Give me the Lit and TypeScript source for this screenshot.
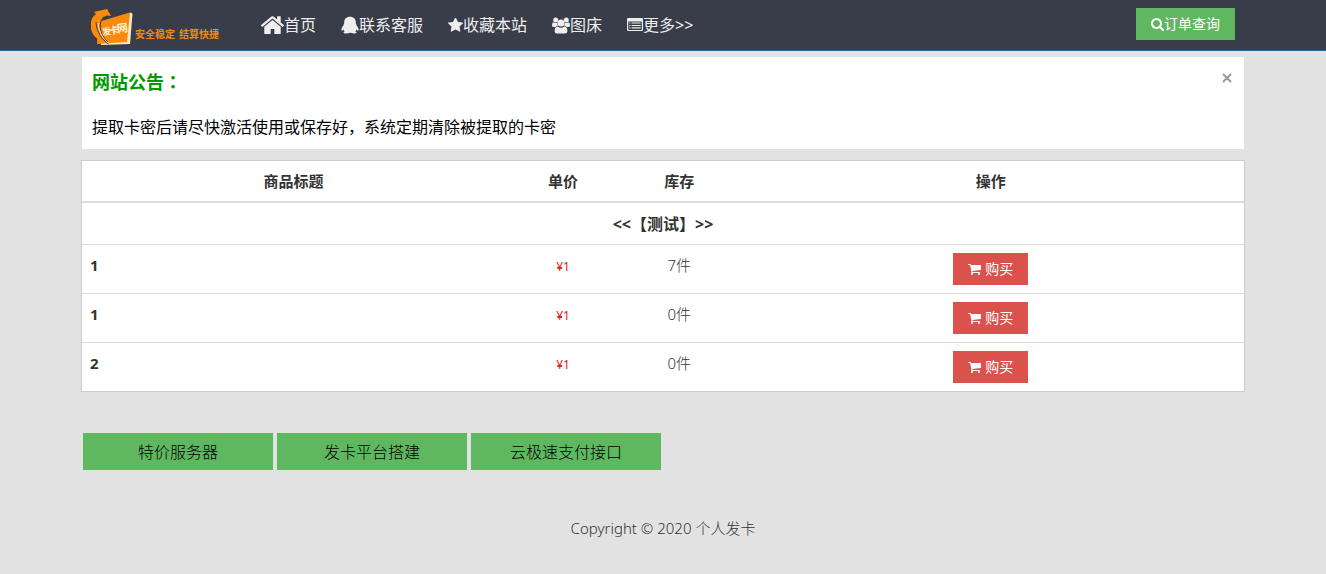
import { LitElement, html, svg, css } from "lit";
import { customElement, state } from "lit/decorators.js";

const star = svg`<svg class="icon w15" viewBox="64 96 1664 1600" aria-hidden="true"><path d="M1728 647q0 22-26 48l-363 354 86 500q1 7 1 20 0 21-10.500 35.500t-30.500 14.500q-19 0-40-12l-449-236-449 236q-22 12-40 12-21 0-31.500-14.500t-10.500-35.500q0-6 2-20l86-500-364-354q-25-27-25-48 0-37 56-46l502-73 225-455q19-41 49-41t49 41l225 455 502 73q56 9 56 46z"/></svg>`;
const home = svg`<svg class="icon w23" viewBox="90 240 1612 1310" aria-hidden="true"><path d="M1472 992v480q0 26-19 45t-45 19h-384v-384h-256v384h-384q-26 0-45-19t-19-45v-480q0-1 .5-3t.5-3l575-474 575 474q1 2 1 6zm223-69l-62 74q-8 9-21 11h-3q-13 0-21-7l-692-577-692 577q-12 8-24 7-13-2-21-11l-62-74q-8-10-7-23.500t11-21.500l719-599q32-26 76-26t76 26l244 204v-195q0-14 9-23t23-9h192q14 0 23 9t9 23v408l219 182q10 8 11 21.500t-7 23.500z"/></svg>`;
const qq = svg`<svg class="icon w18" viewBox="0 0 18 18" aria-hidden="true"><path d="M9 .8C5.300 .8 3.200 3.200 3.200 6v1.300C2.600 8 2.500 8.500 2.600 9.200 1.200 10.900 .2 12.700 .5 14.400c.2 .7 1 .3 1.900-.9 .2 .8 .7 1.500 1.300 2-1 .3-1.300 .8-1.200 1.200 .3 1 4.700 1.100 6.500-.1 1.800 1.200 6.200 1.100 6.500 .1 .1-.4-.2-.9-1.200-1.200 .6-.5 1.100-1.200 1.300-2 .9 1.200 1.700 1.600 1.900 .9 .3-1.700-.7-3.500-2.100-5.200 .1-.7 0-1.200-.6-1.900V6C14.800 3.200 12.700 .8 9 .8z"/></svg>`;
const users = svg`<svg class="icon w18" viewBox="0 0 18 17" aria-hidden="true"><circle cx="3.700" cy="3" r="2.500"/><circle cx="14.300" cy="3" r="2.500"/><path d="M1.300 5.300Q2.300 6.100 3.700 6.100 4.600 6.100 5.300 5.800 5 7.400 6 8.700 4.400 8.800 3.500 9.900H1.800Q0 9.900 0 8.400 0 5.800 1.300 5.300zM16.700 5.300Q15.700 6.100 14.300 6.100 13.400 6.100 12.700 5.800 13 7.400 12 8.700 13.600 8.800 14.500 9.900h1.700Q18 9.900 18 8.400 18 5.800 16.700 5.300z"/><circle cx="9" cy="6.100" r="3.500"/><path d="M5.700 9.400Q7.200 10.700 9 10.700t3.300-1.300Q15.400 9.500 15.400 14.200 15.400 16.600 13.100 16.600H4.900Q2.600 16.600 2.600 14.200 2.600 9.500 5.700 9.400z"/></svg>`;
const list = svg`<svg class="icon w16" viewBox="0 0 16 14" aria-hidden="true"><path fill-rule="evenodd" d="M1.300 0h13.400Q16 0 16 1.300v10.400Q16 13 14.700 13H1.300Q0 13 0 11.700V1.300Q0 0 1.300 0zM1.200 3.500v8q0 .4 .4 .4h12.800q.4 0 .4-.4v-8z"/><path d="M2.300 4.500h1.200v1.100H2.300zM4.600 4.500h9.100v1.100H4.600zM2.300 6.900h1.200V8H2.300zM4.600 6.900h9.100V8H4.600zM2.300 9.300h1.200v1.100H2.300zM4.600 9.300h9.100v1.100H4.600z"/></svg>`;
const search = svg`<svg class="icon w13" viewBox="64 128 1664 1664" aria-hidden="true"><path d="M1216 832q0-185-131.500-316.500t-316.500-131.500-316.500 131.500-131.500 316.500 131.500 316.500 316.500 131.500 316.500-131.500 131.500-316.500zm512 832q0 52-38 90t-90 38q-54 0-90-38l-343-342q-179 124-399 124-143 0-273.500-55.500t-225-150-150-225-55.500-273.500 55.500-273.500 150-225 225-150 273.500-55.500 273.500 55.500 225 150 150 225 55.500 273.500q0 220-124 399l343 343q37 37 37 90z"/></svg>`;
const cart = svg`<svg class="icon w13" viewBox="64 256 1664 1408" aria-hidden="true"><path d="M704 1536q0 52-38 90t-90 38-90-38-38-90 38-90 90-38 90 38 38 90zm896 0q0 52-38 90t-90 38-90-38-38-90 38-90 90-38 90 38 38 90zm128-1088v512q0 24-16.500 42.500t-40.500 21.500l-1044 122q13 60 13 70 0 16-24 64h920q26 0 45 19t19 45-19 45-45 19h-1024q-26 0-45-19t-19-45q0-11 8-31.500t16-36 21.500-40 15.500-29.500l-177-823h-204q-26 0-45-19t-19-45 19-45 45-19h256q16 0 28.500 6.500t19.500 15.500 13 24.500 8 26 5.500 29.500 4.500 26h1201q26 0 45 19t19 45z"/></svg>`;

const navItems = [
  { icon: home, label: "首页" },
  { icon: qq, label: "联系客服" },
  { icon: star, label: "收藏本站" },
  { icon: users, label: "图床" },
  { icon: list, label: "更多>>" },
];

const goods = [
  { title: "1", price: "¥1", stock: "7件" },
  { title: "1", price: "¥1", stock: "0件" },
  { title: "2", price: "¥1", stock: "0件" },
];

const partners = ["特价服务器", "发卡平台搭建", "云极速支付接口"];

@customElement("app-root")
export class AppRoot extends LitElement {
  @state() private noticeOpen = true;

  static styles = css`
    :host {
      display: block;
      min-height: 100vh;
      background: #e2e2e2;
      color: #333;
      font: 15px/20px "Noto Sans", "Noto Sans CJK SC", sans-serif;
    }
    * { box-sizing: border-box; }
    a { color: inherit; text-decoration: none; }
    button { font: inherit; border: 0; padding: 0; cursor: pointer; }
    .container { max-width: 1164px; margin: 0 auto; }
    .icon { fill: currentColor; display: block; flex: none; }
    .w13 { width: 13px; }
    .w15 { width: 15px; }
    .w16 { width: 16px; }
    .w18 { width: 18px; }
    .w23 { width: 23px; }

    .header { background: #393d49; border-bottom: 1px solid #2f6588; }
    .bar { display: flex; align-items: center; height: 50px; padding: 0 10px; }
    .brand { display: flex; margin-right: 42px; }
    .logo { display: block; width: 128px; height: 38px; margin-top: 4px; }
    .logo text { font-family: "Noto Sans CJK SC", sans-serif; font-weight: 700; }
    .nav { display: flex; gap: 25px; flex: 1; color: #eee; font-size: 16px; }
    .link { display: flex; align-items: center; white-space: nowrap; }
    .btn {
      display: inline-flex;
      align-items: center;
      justify-content: center;
      height: 32px;
      padding: 0 15px;
      color: #fff;
      font-size: 14px;
    }
    .query { background: #5fb85f; margin-bottom: 2px; }
    .buy { background: #db524d; gap: 4px; vertical-align: top; }

    .notice {
      display: flex;
      justify-content: space-between;
      align-items: flex-start;
      margin: 6px 1px 11px;
      padding: 13px 10px 12px;
      background: #fff;
    }
    .notice h2 { margin: 0 0 23px; color: #090; font-size: 18px; line-height: 24px; }
    .notice p { margin: 0; color: #000; font-size: 16px; line-height: 20px; }
    .colon { font-family: "Noto Sans CJK TC", sans-serif; line-height: 1; }
    .close { display: flex; padding: 2px; margin-top: 1px; background: none; color: #999; }
    .close svg { width: 10px; stroke: currentColor; stroke-width: 2; }

    .goods {
      width: 100%;
      table-layout: fixed;
      border-collapse: separate;
      border-spacing: 0;
      background: #fff;
      border: 1px solid #ccc;
    }
    .goods th, .goods td { padding: 8px; text-align: center; vertical-align: top; }
    .goods thead th { padding: 10px 8px; border-bottom: 2px solid #ddd; }
    .goods tbody tr:not(:last-child) > * { border-bottom: 1px solid #ddd; }
    .goods .group { padding: 11px 8px 10px; font-size: 16px; }
    .goods .name { text-align: left; }
    .goods .name, .goods .stock { padding-top: 10px; }
    .goods .stock { font-weight: 300; }
    .goods .price { padding-top: 12px; color: #e02020; font-size: 12px; }
    .col-title { width: 36.4%; }
    .col-small { width: 10%; }

    .partners { display: flex; flex-wrap: wrap; gap: 4px; margin-top: 41px; padding: 0 2px; }
    .partner {
      width: 190px;
      padding: 9px 0 8px;
      background: #5fb85f;
      color: #000;
      font-size: 16px;
      font-weight: 300;
      text-align: center;
    }
    .footer { padding: 48px 10px 35px; font-weight: 300; text-align: center; }
  `;

  render() {
    return html`
      <header class="header">
        <div class="container bar">
          <a class="brand" href="#" aria-label="发卡网">
            <svg class="logo" viewBox="0 0 128 38">
              <path d="M12 14 40 4.500 41.500 6 39 36 10 37z" fill="#ffe9c4" />
              <path d="M7 14 39 4.500 36 34 6 36z" fill="#f98a0b" />
              <path d="M19 36C-2 33-5 13 5 6L3 4 16 1 20 8 16 7.500C8 10 5 25 19 36z" fill="#f98a0b" />
              <path d="M13 8.500C7 14 8 27 17 34M5 14C6 25 11 32 18 36" fill="none" stroke="#393d49" stroke-width="1" />
              <path d="M7 15C8 25 12 31 18 35.500" fill="none" stroke="#ffe3b5" stroke-width="1" />
              <g fill="#fff3df">
                <text x="11" y="27" font-size="9" transform="rotate(-8 15 24)">发</text>
                <text x="18" y="26" font-size="10" transform="rotate(-8 23 22)">卡</text>
                <text x="26" y="24" font-size="11" transform="rotate(-8 31 20)">网</text>
              </g>
              <g fill="#ee8a18" font-size="10">
                <text x="44" y="30">安全稳定</text>
                <text x="88" y="30">结算快捷</text>
              </g>
            </svg>
          </a>
          <nav class="nav">
            ${navItems.map((n) => html`<a class="link" href="#">${n.icon}<span>${n.label}</span></a>`)}
          </nav>
          <button class="btn query" type="button">${search}<span>订单查询</span></button>
        </div>
      </header>
      <main class="container">
        ${this.noticeOpen
          ? html`<section class="notice">
              <div>
                <h2>网站公告<span class="colon">：</span></h2>
                <p>提取卡密后请尽快激活使用或保存好，系统定期清除被提取的卡密</p>
              </div>
              <button class="close" type="button" aria-label="关闭" @click=${() => (this.noticeOpen = false)}>
                <svg viewBox="0 0 10 10"><path d="M1 1 9 9M9 1 1 9" /></svg>
              </button>
            </section>`
          : null}
        <table class="goods">
          <thead>
            <tr>
              <th class="col-title" scope="col">商品标题</th>
              <th class="col-small" scope="col">单价</th>
              <th class="col-small" scope="col">库存</th>
              <th scope="col">操作</th>
            </tr>
          </thead>
          <tbody>
            <tr><th class="group" colspan="4">&lt;&lt;【测试】&gt;&gt;</th></tr>
            ${goods.map(
              (g) => html`<tr>
                <th class="name" scope="row">${g.title}</th>
                <td class="price">${g.price}</td>
                <td class="stock">${g.stock}</td>
                <td><button class="btn buy" type="button">${cart}<span>购买</span></button></td>
              </tr>`
            )}
          </tbody>
        </table>
        <div class="partners">
          ${partners.map((p) => html`<a class="partner" href="#">${p}</a>`)}
        </div>
      </main>
      <footer class="footer">Copyright © 2020 个人发卡</footer>
    `;
  }
}
